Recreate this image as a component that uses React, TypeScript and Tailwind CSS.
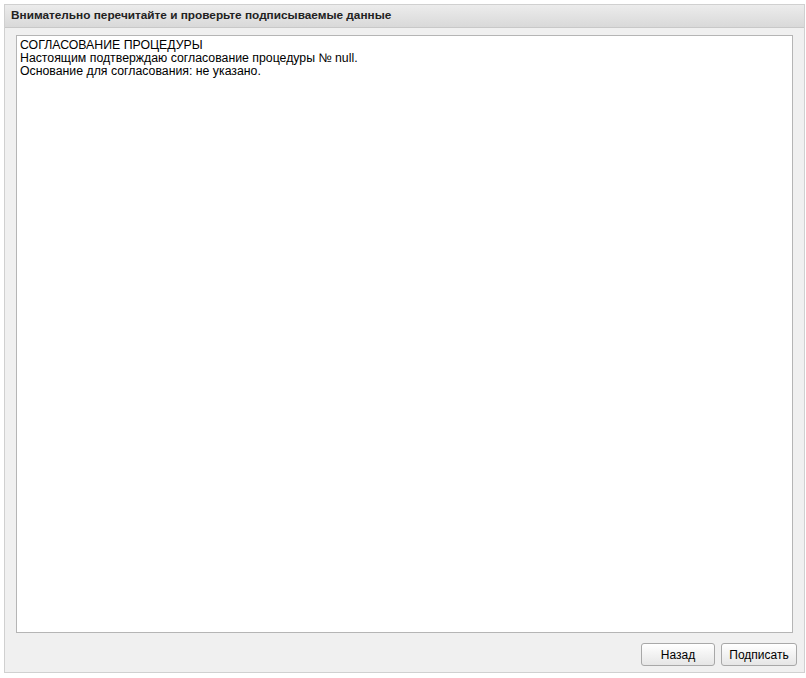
export default function App() {
  return (
    <div className="w-[806px] h-[678px] bg-white pt-[4px] pl-[4px] font-['Liberation_Sans',sans-serif]">
      <div className="w-[801px] h-[669px] flex flex-col border border-[#d0d0d0] bg-[#f0f0f0]">
        {/* Header */}
        <div className="h-[23px] flex items-center px-[6px] border-b border-[#c8c8c8] bg-gradient-to-b from-[#ececec] to-[#d9d9d9]">
          <span className="text-[11.8px] font-bold text-[#222]">Внимательно перечитайте и проверьте подписываемые данные</span>
        </div>

        {/* Content */}
        <div className="flex-1 flex flex-col px-[11px] pt-[7px]">
          <div className="h-[598px] bg-white border border-[#b5b5b5] px-[3px] pt-[3px] text-[12.3px] leading-[13px] text-black">
            <div>СОГЛАСОВАНИЕ ПРОЦЕДУРЫ</div>
            <div>Настоящим подтверждаю согласование процедуры № null.</div>
            <div>Основание для согласования: не указано.</div>
          </div>

          <div className="flex justify-end gap-[6px] mt-[10px] -mr-[4px]">
            <button className="w-[74px] h-[23px] rounded-[3px] border border-[#a8a8a8] bg-gradient-to-b from-[#ffffff] to-[#e6e6e6] text-[12px] text-black">
              Назад
            </button>
            <button className="w-[76px] h-[23px] rounded-[3px] border border-[#a8a8a8] bg-gradient-to-b from-[#ffffff] to-[#e6e6e6] text-[12px] text-black">
              Подписать
            </button>
          </div>
        </div>
      </div>
    </div>
  );
}
